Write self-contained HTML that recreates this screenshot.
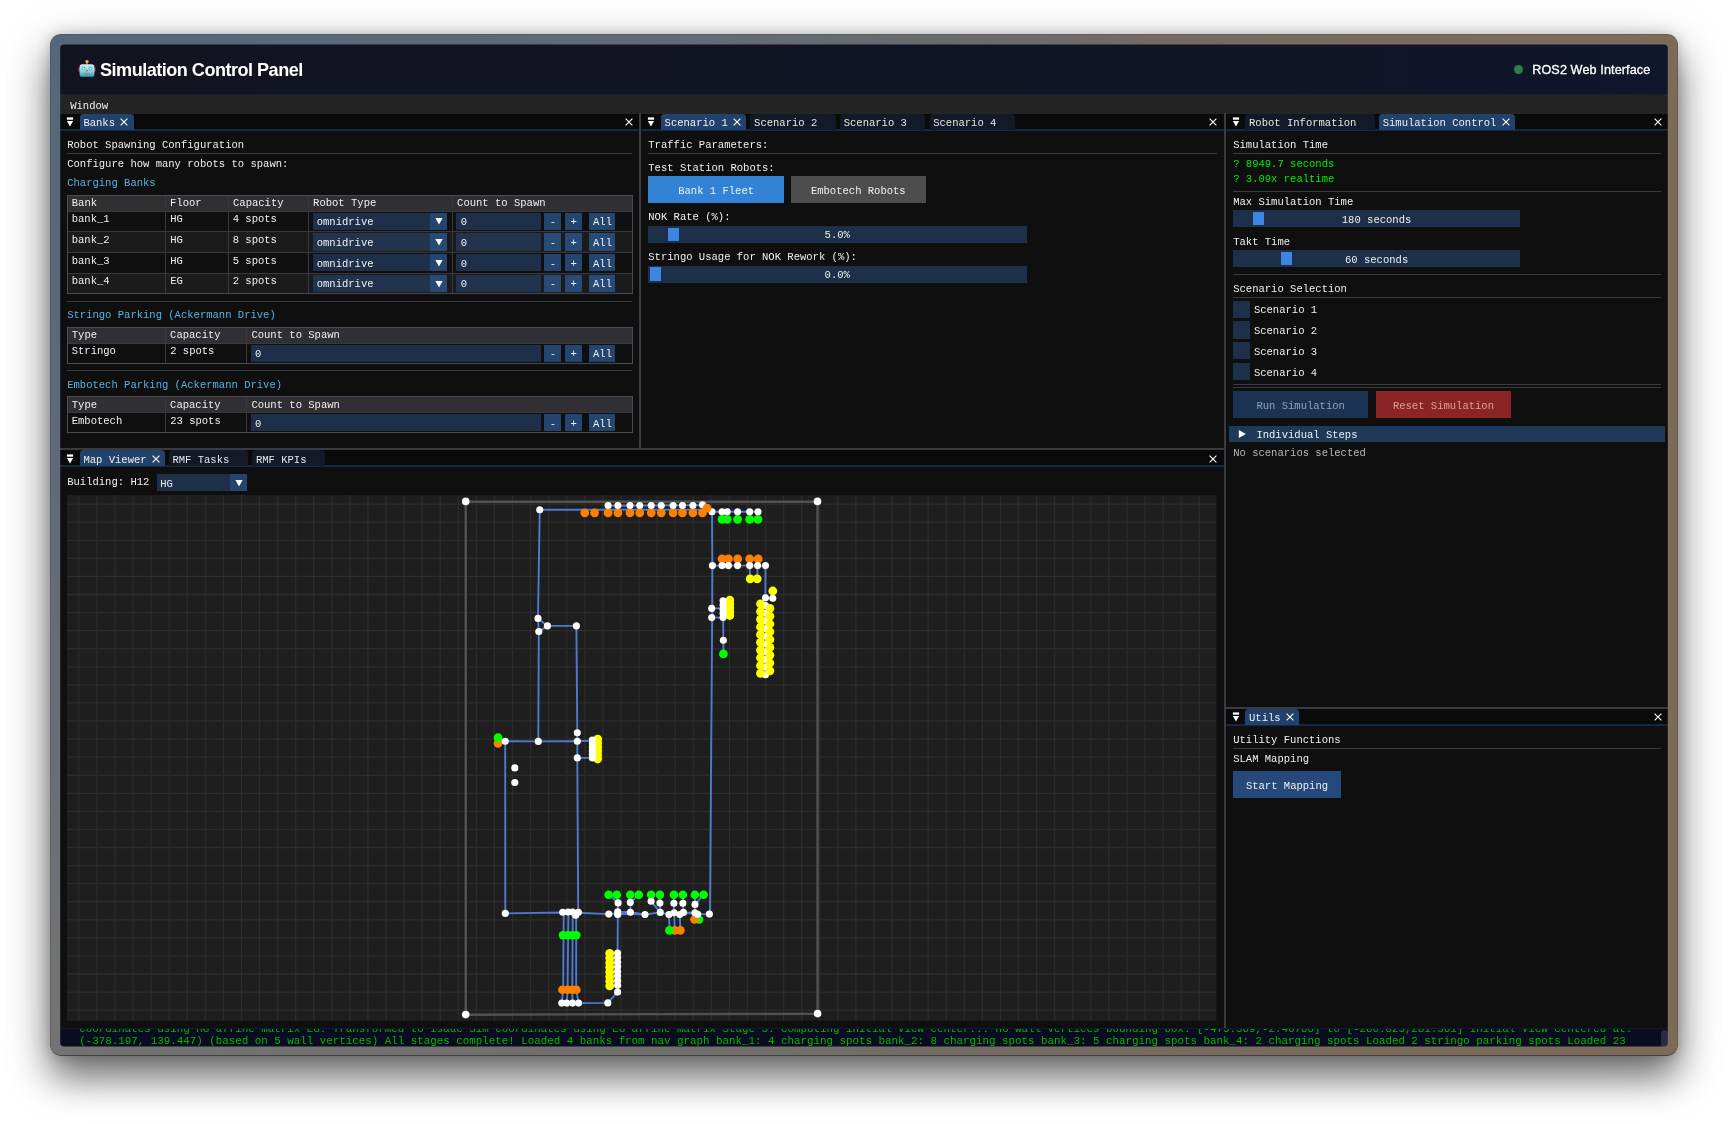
<!DOCTYPE html>
<html lang="en"><head><meta charset="utf-8"><title>Simulation Control Panel</title>
<style>
html,body{margin:0;padding:0;}
body{width:1728px;height:1124px;overflow:hidden;background:#fff;position:relative;font-family:"Liberation Mono","DejaVu Sans Mono",monospace;}
#win{position:absolute;left:50.4px;top:34.3px;width:1627.2px;height:1021.8px;border-radius:11px;
background:radial-gradient(ellipse 75% 96% at 0% 0%,#56677c 0%,rgba(86,103,124,0.8) 35%,rgba(86,103,124,0) 100%),linear-gradient(90deg,#737373 0%,#716f6d 40%,#796b5e 75%,#7d6b5a 100%);
box-shadow:0 22px 36px rgba(0,0,0,0.52),0 8px 60px rgba(0,0,0,0.13),0 0 14px rgba(0,0,0,0.18),inset 0 -1px 0.5px rgba(0,0,0,0.35),inset 0 0 0 0.5px rgba(0,0,0,0.25);}
#c{will-change:transform;position:absolute;left:0;top:0;width:1728px;height:1124px;clip-path:inset(44.4px 60.2px 77.6px 60.2px round 4px);}
#c div,#c svg{position:absolute;}
.t{font-size:10.54px;line-height:12px;white-space:pre;color:#f0f0f0;}
.hd{font-family:"Liberation Sans","DejaVu Sans",sans-serif;color:#fff;white-space:pre;}
.lg{font-family:"Liberation Mono","DejaVu Sans Mono",monospace;font-size:10.84px;line-height:12.5px;color:#00b800;white-space:pre;}
</style></head><body>
<div id="win"></div>
<div id="c">
<div style="left:60px;top:44px;width:1608px;height:51px;background:linear-gradient(90deg,#13131f 0%,#10162b 100%);"></div>
<div style="left:60.00px;top:94.00px;width:1608.00px;height:1.00px;background:#181e33;"></div>
<svg style="left:77px;top:58px" width="20" height="22" viewBox="0 0 20 22">
<defs><linearGradient id="rg" x1="0" y1="0" x2="0" y2="1"><stop offset="0" stop-color="#cfeef3"/><stop offset="0.55" stop-color="#8fd3de"/><stop offset="1" stop-color="#2f9db0"/></linearGradient></defs>
<rect x="1.5" y="9.6" width="1.8" height="4.2" rx="0.7" fill="#c23b30"/><rect x="16.7" y="9.6" width="1.8" height="4.2" rx="0.7" fill="#c23b30"/>
<rect x="9" y="4.6" width="2" height="2.4" fill="#7d5aa6"/>
<circle cx="10" cy="3.6" r="1.7" fill="#f4b62a"/>
<rect x="2.6" y="6.2" width="14.8" height="12.6" rx="2.6" fill="url(#rg)"/>
<circle cx="6.6" cy="10.6" r="2" fill="#4fc3e0"/><circle cx="13.4" cy="10.6" r="2" fill="#4fc3e0"/>
<circle cx="6.6" cy="10.6" r="0.9" fill="#fff"/><circle cx="13.4" cy="10.6" r="0.9" fill="#fff"/>
<circle cx="10" cy="12.6" r="0.9" fill="#e0483b"/>
<rect x="7" y="15.2" width="6" height="1.5" rx="0.4" fill="#7c8f95"/>
</svg>
<div class="hd" style="left:100px;top:59.2px;font-size:18.07px;font-weight:700;line-height:22px;letter-spacing:-0.5px;">Simulation Control Panel</div>
<div style="left:1514px;top:65.4px;width:9px;height:9px;border-radius:50%;background:#2f7d47;"></div>
<div class="hd" style="left:1532.2px;top:62px;font-size:12.65px;font-weight:400;line-height:16px;letter-spacing:0.1px;-webkit-text-stroke:0.3px #fff;">ROS2 Web Interface</div>
<div style="left:60.00px;top:95.00px;width:1608.00px;height:19.00px;background:#242424;"></div>
<div class="t" style="left:70.20px;top:100.00px;">Window</div>
<div style="left:60.00px;top:114.00px;width:1608.00px;height:914.00px;background:#0f0f0f;"></div>
<div style="left:60.00px;top:113.90px;width:579.00px;height:17.00px;background:#0a0a0a;"></div>
<svg style="left:60.00px;top:128.00px" width="579.00" height="4" viewBox="0 0 579.00 4"><rect x="0" y="1.3" width="579.00" height="1.5" fill="#1a3354"/></svg>
<svg style="left:65.90px;top:117.30px" width="8" height="10" viewBox="0 0 8 10"><rect x="0.9" y="0.4" width="6.2" height="2.3" fill="#fff"/><path d="M0.9 4.1 L7.1 4.1 L4 9.4 Z" fill="#fff"/></svg>
<div style="left:79.70px;top:114.20px;width:54.10px;height:15.80px;background:#23426b;border-radius:3.6px 3.6px 0 0;"></div>
<div class="t" style="left:83.40px;top:117.40px;">Banks</div>
<svg style="left:119.10px;top:117.40px" width="10" height="10" viewBox="-5 -5 10 10"><path d="M-3.4 -3.4 L3.4 3.4 M3.4 -3.4 L-3.4 3.4" stroke="#fff" stroke-width="1.1" fill="none"/></svg>
<svg style="left:623.50px;top:117.30px" width="10" height="10" viewBox="-5 -5 10 10"><path d="M-3.4 -3.4 L3.4 3.4 M3.4 -3.4 L-3.4 3.4" stroke="#fff" stroke-width="1.1" fill="none"/></svg>
<div style="left:641.00px;top:113.90px;width:583.00px;height:17.00px;background:#0a0a0a;"></div>
<svg style="left:641.00px;top:128.00px" width="583.00" height="4" viewBox="0 0 583.00 4"><rect x="0" y="1.3" width="583.00" height="1.5" fill="#1a3354"/></svg>
<svg style="left:646.90px;top:117.30px" width="8" height="10" viewBox="0 0 8 10"><rect x="0.9" y="0.4" width="6.2" height="2.3" fill="#fff"/><path d="M0.9 4.1 L7.1 4.1 L4 9.4 Z" fill="#fff"/></svg>
<div style="left:660.90px;top:114.20px;width:85.30px;height:15.80px;background:#23426b;border-radius:3.6px 3.6px 0 0;"></div>
<div class="t" style="left:664.60px;top:117.40px;">Scenario 1</div>
<svg style="left:731.50px;top:117.40px" width="10" height="10" viewBox="-5 -5 10 10"><path d="M-3.4 -3.4 L3.4 3.4 M3.4 -3.4 L-3.4 3.4" stroke="#fff" stroke-width="1.1" fill="none"/></svg>
<div style="left:750.40px;top:114.20px;width:85.40px;height:15.80px;background:#121a27;border-radius:3.6px 3.6px 0 0;"></div>
<div class="t" style="left:754.10px;top:117.40px;color:#e6e6e6;">Scenario 2</div>
<div style="left:840.00px;top:114.20px;width:85.20px;height:15.80px;background:#121a27;border-radius:3.6px 3.6px 0 0;"></div>
<div class="t" style="left:843.70px;top:117.40px;color:#e6e6e6;">Scenario 3</div>
<div style="left:929.50px;top:114.20px;width:85.20px;height:15.80px;background:#121a27;border-radius:3.6px 3.6px 0 0;"></div>
<div class="t" style="left:933.20px;top:117.40px;color:#e6e6e6;">Scenario 4</div>
<svg style="left:1208.30px;top:117.30px" width="10" height="10" viewBox="-5 -5 10 10"><path d="M-3.4 -3.4 L3.4 3.4 M3.4 -3.4 L-3.4 3.4" stroke="#fff" stroke-width="1.1" fill="none"/></svg>
<div style="left:1226.00px;top:113.90px;width:442.00px;height:17.00px;background:#0a0a0a;"></div>
<svg style="left:1226.00px;top:128.00px" width="442.00" height="4" viewBox="0 0 442.00 4"><rect x="0" y="1.3" width="442.00" height="1.5" fill="#1a3354"/></svg>
<svg style="left:1231.90px;top:117.30px" width="8" height="10" viewBox="0 0 8 10"><rect x="0.9" y="0.4" width="6.2" height="2.3" fill="#fff"/><path d="M0.9 4.1 L7.1 4.1 L4 9.4 Z" fill="#fff"/></svg>
<div style="left:1245.30px;top:114.20px;width:129.70px;height:15.80px;background:#121a27;border-radius:3.6px 3.6px 0 0;"></div>
<div class="t" style="left:1249.00px;top:117.40px;color:#e6e6e6;">Robot Information</div>
<div style="left:1379.00px;top:114.20px;width:136.20px;height:15.80px;background:#23426b;border-radius:3.6px 3.6px 0 0;"></div>
<div class="t" style="left:1382.70px;top:117.40px;">Simulation Control</div>
<svg style="left:1500.50px;top:117.40px" width="10" height="10" viewBox="-5 -5 10 10"><path d="M-3.4 -3.4 L3.4 3.4 M3.4 -3.4 L-3.4 3.4" stroke="#fff" stroke-width="1.1" fill="none"/></svg>
<svg style="left:1652.50px;top:117.30px" width="10" height="10" viewBox="-5 -5 10 10"><path d="M-3.4 -3.4 L3.4 3.4 M3.4 -3.4 L-3.4 3.4" stroke="#fff" stroke-width="1.1" fill="none"/></svg>
<div style="left:60.00px;top:450.10px;width:1164.00px;height:17.00px;background:#0a0a0a;"></div>
<svg style="left:60.00px;top:464.20px" width="1164.00" height="4" viewBox="0 0 1164.00 4"><rect x="0" y="1.3" width="1164.00" height="1.5" fill="#1a3354"/></svg>
<svg style="left:65.90px;top:453.50px" width="8" height="10" viewBox="0 0 8 10"><rect x="0.9" y="0.4" width="6.2" height="2.3" fill="#fff"/><path d="M0.9 4.1 L7.1 4.1 L4 9.4 Z" fill="#fff"/></svg>
<div style="left:79.70px;top:450.40px;width:85.60px;height:15.80px;background:#23426b;border-radius:3.6px 3.6px 0 0;"></div>
<div class="t" style="left:83.40px;top:453.60px;">Map Viewer</div>
<svg style="left:150.60px;top:453.60px" width="10" height="10" viewBox="-5 -5 10 10"><path d="M-3.4 -3.4 L3.4 3.4 M3.4 -3.4 L-3.4 3.4" stroke="#fff" stroke-width="1.1" fill="none"/></svg>
<div style="left:168.70px;top:450.40px;width:79.80px;height:15.80px;background:#121a27;border-radius:3.6px 3.6px 0 0;"></div>
<div class="t" style="left:172.40px;top:453.60px;color:#e6e6e6;">RMF Tasks</div>
<div style="left:252.20px;top:450.40px;width:72.80px;height:15.80px;background:#121a27;border-radius:3.6px 3.6px 0 0;"></div>
<div class="t" style="left:255.90px;top:453.60px;color:#e6e6e6;">RMF KPIs</div>
<svg style="left:1208.30px;top:453.50px" width="10" height="10" viewBox="-5 -5 10 10"><path d="M-3.4 -3.4 L3.4 3.4 M3.4 -3.4 L-3.4 3.4" stroke="#fff" stroke-width="1.1" fill="none"/></svg>
<div style="left:1226.00px;top:708.60px;width:442.00px;height:17.00px;background:#0a0a0a;"></div>
<svg style="left:1226.00px;top:722.70px" width="442.00" height="4" viewBox="0 0 442.00 4"><rect x="0" y="1.3" width="442.00" height="1.5" fill="#1a3354"/></svg>
<svg style="left:1231.90px;top:712.00px" width="8" height="10" viewBox="0 0 8 10"><rect x="0.9" y="0.4" width="6.2" height="2.3" fill="#fff"/><path d="M0.9 4.1 L7.1 4.1 L4 9.4 Z" fill="#fff"/></svg>
<div style="left:1245.30px;top:708.90px;width:54.00px;height:15.80px;background:#23426b;border-radius:3.6px 3.6px 0 0;"></div>
<div class="t" style="left:1249.00px;top:712.10px;">Utils</div>
<svg style="left:1284.60px;top:712.10px" width="10" height="10" viewBox="-5 -5 10 10"><path d="M-3.4 -3.4 L3.4 3.4 M3.4 -3.4 L-3.4 3.4" stroke="#fff" stroke-width="1.1" fill="none"/></svg>
<svg style="left:1652.50px;top:712.00px" width="10" height="10" viewBox="-5 -5 10 10"><path d="M-3.4 -3.4 L3.4 3.4 M3.4 -3.4 L-3.4 3.4" stroke="#fff" stroke-width="1.1" fill="none"/></svg>
<div style="left:639.00px;top:113.40px;width:2.00px;height:334.60px;background:#3a3a42;"></div>
<div style="left:1224.00px;top:113.40px;width:2.00px;height:914.60px;background:#3a3a42;"></div>
<div style="left:60.00px;top:448.00px;width:1164.00px;height:2.00px;background:#3a3a42;"></div>
<div style="left:1226.00px;top:706.50px;width:442.00px;height:2.00px;background:#3a3a42;"></div>
<div class="t" style="left:67.20px;top:139.20px;">Robot Spawning Configuration</div>
<div style="left:67.20px;top:153.20px;width:565.00px;height:1.00px;background:#3b3b42;"></div>
<div class="t" style="left:67.20px;top:157.90px;">Configure how many robots to spawn:</div>
<div class="t" style="left:67.20px;top:177.20px;color:#56b4e4;">Charging Banks</div>
<div style="left:67.20px;top:195.30px;width:565.00px;height:15.90px;background:#303034;"></div>
<div class="t" style="left:71.80px;top:197.20px;">Bank</div>
<div class="t" style="left:170.10px;top:197.20px;">Floor</div>
<div class="t" style="left:233.00px;top:197.20px;">Capacity</div>
<div class="t" style="left:313.10px;top:197.20px;">Robot Type</div>
<div class="t" style="left:457.10px;top:197.20px;">Count to Spawn</div>
<div class="t" style="left:71.70px;top:213.00px;">bank_1</div>
<div class="t" style="left:170.20px;top:213.00px;">HG</div>
<div class="t" style="left:232.70px;top:213.00px;">4 spots</div>
<div style="left:313.00px;top:212.60px;width:134.20px;height:17.20px;background:#1d2f49;"></div>
<div style="left:430.00px;top:212.60px;width:17.20px;height:17.20px;background:#24456d;"></div>
<svg style="left:432.60px;top:215.30px" width="12" height="12" viewBox="-6 -6 12 12"><path d="M-3.6 -2.8800000000000003 L3.6 -2.8800000000000003 L0 3.42 Z" fill="#fff"/></svg>
<div class="t" style="left:316.70px;top:216.00px;">omnidrive</div>
<div style="left:456.40px;top:212.60px;width:84.20px;height:17.20px;background:#1d2f49;"></div>
<div class="t" style="left:460.70px;top:216.00px;">0</div>
<div style="left:544.20px;top:212.60px;width:17.20px;height:17.20px;background:#24456d;"></div>
<div class="t" style="left:549.70px;top:216.00px;">-</div>
<div style="left:564.90px;top:212.60px;width:17.20px;height:17.20px;background:#24456d;"></div>
<div class="t" style="left:570.40px;top:216.00px;">+</div>
<div style="left:589.30px;top:212.60px;width:26.20px;height:17.20px;background:#24456d;"></div>
<div class="t" style="left:593.00px;top:216.00px;">All</div>
<div style="left:67.20px;top:231.98px;width:565.00px;height:20.78px;background:#1b1b1c;"></div>
<div class="t" style="left:71.70px;top:233.78px;">bank_2</div>
<div class="t" style="left:170.20px;top:233.78px;">HG</div>
<div class="t" style="left:232.70px;top:233.78px;">8 spots</div>
<div style="left:313.00px;top:233.38px;width:134.20px;height:17.20px;background:#22344d;"></div>
<div style="left:430.00px;top:233.38px;width:17.20px;height:17.20px;background:#284a76;"></div>
<svg style="left:432.60px;top:236.08px" width="12" height="12" viewBox="-6 -6 12 12"><path d="M-3.6 -2.8800000000000003 L3.6 -2.8800000000000003 L0 3.42 Z" fill="#fff"/></svg>
<div class="t" style="left:316.70px;top:236.78px;">omnidrive</div>
<div style="left:456.40px;top:233.38px;width:84.20px;height:17.20px;background:#22344d;"></div>
<div class="t" style="left:460.70px;top:236.78px;">0</div>
<div style="left:544.20px;top:233.38px;width:17.20px;height:17.20px;background:#284a76;"></div>
<div class="t" style="left:549.70px;top:236.78px;">-</div>
<div style="left:564.90px;top:233.38px;width:17.20px;height:17.20px;background:#284a76;"></div>
<div class="t" style="left:570.40px;top:236.78px;">+</div>
<div style="left:589.30px;top:233.38px;width:26.20px;height:17.20px;background:#284a76;"></div>
<div class="t" style="left:593.00px;top:236.78px;">All</div>
<div class="t" style="left:71.70px;top:254.56px;">bank_3</div>
<div class="t" style="left:170.20px;top:254.56px;">HG</div>
<div class="t" style="left:232.70px;top:254.56px;">5 spots</div>
<div style="left:313.00px;top:254.16px;width:134.20px;height:17.20px;background:#1d2f49;"></div>
<div style="left:430.00px;top:254.16px;width:17.20px;height:17.20px;background:#24456d;"></div>
<svg style="left:432.60px;top:256.86px" width="12" height="12" viewBox="-6 -6 12 12"><path d="M-3.6 -2.8800000000000003 L3.6 -2.8800000000000003 L0 3.42 Z" fill="#fff"/></svg>
<div class="t" style="left:316.70px;top:257.56px;">omnidrive</div>
<div style="left:456.40px;top:254.16px;width:84.20px;height:17.20px;background:#1d2f49;"></div>
<div class="t" style="left:460.70px;top:257.56px;">0</div>
<div style="left:544.20px;top:254.16px;width:17.20px;height:17.20px;background:#24456d;"></div>
<div class="t" style="left:549.70px;top:257.56px;">-</div>
<div style="left:564.90px;top:254.16px;width:17.20px;height:17.20px;background:#24456d;"></div>
<div class="t" style="left:570.40px;top:257.56px;">+</div>
<div style="left:589.30px;top:254.16px;width:26.20px;height:17.20px;background:#24456d;"></div>
<div class="t" style="left:593.00px;top:257.56px;">All</div>
<div style="left:67.20px;top:273.54px;width:565.00px;height:19.83px;background:#1b1b1c;"></div>
<div class="t" style="left:71.70px;top:275.34px;">bank_4</div>
<div class="t" style="left:170.20px;top:275.34px;">EG</div>
<div class="t" style="left:232.70px;top:275.34px;">2 spots</div>
<div style="left:313.00px;top:274.94px;width:134.20px;height:17.20px;background:#22344d;"></div>
<div style="left:430.00px;top:274.94px;width:17.20px;height:17.20px;background:#284a76;"></div>
<svg style="left:432.60px;top:277.64px" width="12" height="12" viewBox="-6 -6 12 12"><path d="M-3.6 -2.8800000000000003 L3.6 -2.8800000000000003 L0 3.42 Z" fill="#fff"/></svg>
<div class="t" style="left:316.70px;top:278.34px;">omnidrive</div>
<div style="left:456.40px;top:274.94px;width:84.20px;height:17.20px;background:#22344d;"></div>
<div class="t" style="left:460.70px;top:278.34px;">0</div>
<div style="left:544.20px;top:274.94px;width:17.20px;height:17.20px;background:#284a76;"></div>
<div class="t" style="left:549.70px;top:278.34px;">-</div>
<div style="left:564.90px;top:274.94px;width:17.20px;height:17.20px;background:#284a76;"></div>
<div class="t" style="left:570.40px;top:278.34px;">+</div>
<div style="left:589.30px;top:274.94px;width:26.20px;height:17.20px;background:#284a76;"></div>
<div class="t" style="left:593.00px;top:278.34px;">All</div>
<div style="left:67.20px;top:210.70px;width:565.00px;height:1.00px;background:#38383e;"></div>
<div style="left:67.20px;top:231.48px;width:565.00px;height:1.00px;background:#38383e;"></div>
<div style="left:67.20px;top:252.26px;width:565.00px;height:1.00px;background:#38383e;"></div>
<div style="left:67.20px;top:273.04px;width:565.00px;height:1.00px;background:#38383e;"></div>
<div style="left:164.90px;top:195.30px;width:1.00px;height:98.07px;background:#38383e;"></div>
<div style="left:227.80px;top:195.30px;width:1.00px;height:98.07px;background:#38383e;"></div>
<div style="left:307.90px;top:195.30px;width:1.00px;height:98.07px;background:#38383e;"></div>
<div style="left:451.90px;top:195.30px;width:1.00px;height:98.07px;background:#38383e;"></div>
<div style="left:67px;top:195px;width:566px;height:99px;border:1px solid #4a4a52;box-sizing:border-box;"></div>
<div style="left:67.20px;top:300.70px;width:565.00px;height:1.00px;background:#3b3b42;"></div>
<div class="t" style="left:67.20px;top:309.20px;color:#56b4e4;">Stringo Parking (Ackermann Drive)</div>
<div style="left:67.20px;top:327.30px;width:565.00px;height:15.90px;background:#303034;"></div>
<div class="t" style="left:71.80px;top:329.20px;">Type</div>
<div class="t" style="left:170.10px;top:329.20px;">Capacity</div>
<div class="t" style="left:251.40px;top:329.20px;">Count to Spawn</div>
<div class="t" style="left:71.70px;top:345.00px;">Stringo</div>
<div class="t" style="left:170.20px;top:345.00px;">2 spots</div>
<div style="left:250.60px;top:344.60px;width:290.00px;height:17.20px;background:#1d2f49;"></div>
<div class="t" style="left:254.90px;top:348.00px;">0</div>
<div style="left:544.20px;top:344.60px;width:17.20px;height:17.20px;background:#24456d;"></div>
<div class="t" style="left:549.70px;top:348.00px;">-</div>
<div style="left:564.90px;top:344.60px;width:17.20px;height:17.20px;background:#24456d;"></div>
<div class="t" style="left:570.40px;top:348.00px;">+</div>
<div style="left:589.30px;top:344.60px;width:26.20px;height:17.20px;background:#24456d;"></div>
<div class="t" style="left:593.00px;top:348.00px;">All</div>
<div style="left:67.20px;top:342.70px;width:565.00px;height:1.00px;background:#38383e;"></div>
<div style="left:164.90px;top:327.30px;width:1.00px;height:35.73px;background:#38383e;"></div>
<div style="left:246.20px;top:327.30px;width:1.00px;height:35.73px;background:#38383e;"></div>
<div style="left:67px;top:327px;width:566px;height:37px;border:1px solid #4a4a52;box-sizing:border-box;"></div>
<div style="left:67.20px;top:370.30px;width:565.00px;height:1.00px;background:#3b3b42;"></div>
<div class="t" style="left:67.20px;top:378.80px;color:#56b4e4;">Embotech Parking (Ackermann Drive)</div>
<div style="left:67.20px;top:397.00px;width:565.00px;height:15.90px;background:#303034;"></div>
<div class="t" style="left:71.80px;top:398.90px;">Type</div>
<div class="t" style="left:170.10px;top:398.90px;">Capacity</div>
<div class="t" style="left:251.40px;top:398.90px;">Count to Spawn</div>
<div class="t" style="left:71.70px;top:414.70px;">Embotech</div>
<div class="t" style="left:170.20px;top:414.70px;">23 spots</div>
<div style="left:250.60px;top:414.30px;width:290.00px;height:17.20px;background:#1d2f49;"></div>
<div class="t" style="left:254.90px;top:417.70px;">0</div>
<div style="left:544.20px;top:414.30px;width:17.20px;height:17.20px;background:#24456d;"></div>
<div class="t" style="left:549.70px;top:417.70px;">-</div>
<div style="left:564.90px;top:414.30px;width:17.20px;height:17.20px;background:#24456d;"></div>
<div class="t" style="left:570.40px;top:417.70px;">+</div>
<div style="left:589.30px;top:414.30px;width:26.20px;height:17.20px;background:#24456d;"></div>
<div class="t" style="left:593.00px;top:417.70px;">All</div>
<div style="left:67.20px;top:412.40px;width:565.00px;height:1.00px;background:#38383e;"></div>
<div style="left:164.90px;top:397.00px;width:1.00px;height:35.73px;background:#38383e;"></div>
<div style="left:246.20px;top:397.00px;width:1.00px;height:35.73px;background:#38383e;"></div>
<div style="left:67px;top:396px;width:566px;height:37px;border:1px solid #4a4a52;box-sizing:border-box;"></div>
<div class="t" style="left:648.30px;top:139.20px;">Traffic Parameters:</div>
<div style="left:648.30px;top:153.10px;width:568.70px;height:1.00px;background:#3b3b42;"></div>
<div class="t" style="left:648.30px;top:161.60px;">Test Station Robots:</div>
<div style="left:648.30px;top:175.90px;width:135.30px;height:26.90px;background:#3283d6;"></div>
<div class="t" style="left:678.20px;top:184.60px;">Bank 1 Fleet</div>
<div style="left:790.80px;top:175.90px;width:135.30px;height:26.90px;background:#4d4d4d;"></div>
<div class="t" style="left:810.90px;top:184.60px;">Embotech Robots</div>
<div class="t" style="left:648.30px;top:211.40px;">NOK Rate (%):</div>
<div style="left:648.30px;top:226.00px;width:378.30px;height:17.00px;background:#1d2f49;"></div>
<div style="left:667.90px;top:227.80px;width:10.90px;height:13.40px;background:#3d85e0;"></div>
<div class="t" style="left:824.60px;top:229.20px;">5.0%</div>
<div class="t" style="left:648.30px;top:251.20px;">Stringo Usage for NOK Rework (%):</div>
<div style="left:648.30px;top:265.60px;width:378.30px;height:17.00px;background:#1d2f49;"></div>
<div style="left:650.10px;top:267.40px;width:10.90px;height:13.40px;background:#3d85e0;"></div>
<div class="t" style="left:824.60px;top:269.10px;">0.0%</div>
<div class="t" style="left:1233.20px;top:139.10px;">Simulation Time</div>
<div style="left:1233.20px;top:153.20px;width:427.60px;height:1.00px;background:#3b3b42;"></div>
<div class="t" style="left:1233.20px;top:157.70px;color:#00ee00;">? 8949.7 seconds</div>
<div class="t" style="left:1233.20px;top:173.20px;color:#00ee00;">? 3.09x realtime</div>
<div style="left:1233.20px;top:191.30px;width:427.60px;height:1.00px;background:#3b3b42;"></div>
<div class="t" style="left:1233.20px;top:195.80px;">Max Simulation Time</div>
<div style="left:1233.20px;top:210.10px;width:286.80px;height:17.20px;background:#1d2f49;"></div>
<div style="left:1253.30px;top:211.90px;width:11.20px;height:13.60px;background:#3d85e0;"></div>
<div class="t" style="left:1341.80px;top:213.80px;">180 seconds</div>
<div class="t" style="left:1233.20px;top:235.60px;">Takt Time</div>
<div style="left:1233.20px;top:249.90px;width:286.80px;height:17.20px;background:#1d2f49;"></div>
<div style="left:1281.30px;top:251.70px;width:11.10px;height:13.60px;background:#3d85e0;"></div>
<div class="t" style="left:1345.00px;top:253.60px;">60 seconds</div>
<div style="left:1233.20px;top:274.30px;width:427.60px;height:1.00px;background:#3b3b42;"></div>
<div class="t" style="left:1233.20px;top:282.50px;">Scenario Selection</div>
<div style="left:1233.20px;top:296.90px;width:427.60px;height:1.00px;background:#3b3b42;"></div>
<div style="left:1233.20px;top:300.70px;width:17.20px;height:17.20px;background:#1d2f49;"></div>
<div class="t" style="left:1253.90px;top:304.30px;">Scenario 1</div>
<div style="left:1233.20px;top:321.48px;width:17.20px;height:17.20px;background:#1d2f49;"></div>
<div class="t" style="left:1253.90px;top:325.08px;">Scenario 2</div>
<div style="left:1233.20px;top:342.26px;width:17.20px;height:17.20px;background:#1d2f49;"></div>
<div class="t" style="left:1253.90px;top:345.86px;">Scenario 3</div>
<div style="left:1233.20px;top:363.04px;width:17.20px;height:17.20px;background:#1d2f49;"></div>
<div class="t" style="left:1253.90px;top:366.64px;">Scenario 4</div>
<div style="left:1233.20px;top:384.00px;width:427.60px;height:1.00px;background:#3b3b42;"></div>
<div style="left:1233.20px;top:387.30px;width:427.60px;height:1.00px;background:#3b3b42;"></div>
<div style="left:1233.20px;top:391.10px;width:135.00px;height:27.00px;background:#1b3353;"></div>
<div class="t" style="left:1256.40px;top:399.60px;color:#93a1b3;">Run Simulation</div>
<div style="left:1375.80px;top:391.10px;width:135.20px;height:27.00px;background:#8b2424;"></div>
<div class="t" style="left:1392.90px;top:399.60px;color:#d8a0a0;">Reset Simulation</div>
<div style="left:1228.90px;top:425.70px;width:436.30px;height:16.60px;background:#1f3958;"></div>
<svg style="left:1237px;top:428.5px" width="10" height="10" viewBox="-5 -5 10 10"><path d="M-3.2 -4 L3.9 0 L-3.2 4 Z" fill="#fff"/></svg>
<div class="t" style="left:1256.40px;top:429.30px;">Individual Steps</div>
<div class="t" style="left:1233.20px;top:447.40px;color:#b8b8b8;">No scenarios selected</div>
<div class="t" style="left:1233.20px;top:734.40px;">Utility Functions</div>
<div style="left:1233.20px;top:747.80px;width:427.60px;height:1.00px;background:#3b3b42;"></div>
<div class="t" style="left:1233.20px;top:753.00px;">SLAM Mapping</div>
<div style="left:1233.20px;top:770.60px;width:108.00px;height:27.20px;background:#24497a;"></div>
<div class="t" style="left:1245.90px;top:779.60px;">Start Mapping</div>
<div class="t" style="left:67.20px;top:475.60px;">Building: H12</div>
<div style="left:156.50px;top:474.30px;width:90.60px;height:17.20px;background:#1d2f49;"></div>
<div style="left:229.90px;top:474.30px;width:17.20px;height:17.20px;background:#24456d;"></div>
<svg style="left:232.50px;top:477.00px" width="12" height="12" viewBox="-6 -6 12 12"><path d="M-3.6 -2.8800000000000003 L3.6 -2.8800000000000003 L0 3.42 Z" fill="#fff"/></svg>
<div class="t" style="left:160.20px;top:477.70px;">HG</div>
<svg style="left:67.2px;top:495.2px" width="1149.40" height="525.90" viewBox="67.2 495.2 1149.40 525.90">
<rect x="67.2" y="495.2" width="1149.40" height="525.90" fill="#1e1e1e"/>
<path d="M79.00 495.2V1021.1M97.07 495.2V1021.1M115.14 495.2V1021.1M133.22 495.2V1021.1M151.29 495.2V1021.1M169.36 495.2V1021.1M187.43 495.2V1021.1M205.50 495.2V1021.1M223.58 495.2V1021.1M241.65 495.2V1021.1M259.72 495.2V1021.1M277.79 495.2V1021.1M295.86 495.2V1021.1M313.94 495.2V1021.1M332.01 495.2V1021.1M350.08 495.2V1021.1M368.15 495.2V1021.1M386.22 495.2V1021.1M404.30 495.2V1021.1M422.37 495.2V1021.1M440.44 495.2V1021.1M458.51 495.2V1021.1M476.58 495.2V1021.1M494.66 495.2V1021.1M512.73 495.2V1021.1M530.80 495.2V1021.1M548.87 495.2V1021.1M566.94 495.2V1021.1M585.02 495.2V1021.1M603.09 495.2V1021.1M621.16 495.2V1021.1M639.23 495.2V1021.1M657.30 495.2V1021.1M675.38 495.2V1021.1M693.45 495.2V1021.1M711.52 495.2V1021.1M729.59 495.2V1021.1M747.66 495.2V1021.1M765.74 495.2V1021.1M783.81 495.2V1021.1M801.88 495.2V1021.1M819.95 495.2V1021.1M838.02 495.2V1021.1M856.10 495.2V1021.1M874.17 495.2V1021.1M892.24 495.2V1021.1M910.31 495.2V1021.1M928.38 495.2V1021.1M946.46 495.2V1021.1M964.53 495.2V1021.1M982.60 495.2V1021.1M1000.67 495.2V1021.1M1018.74 495.2V1021.1M1036.82 495.2V1021.1M1054.89 495.2V1021.1M1072.96 495.2V1021.1M1091.03 495.2V1021.1M1109.10 495.2V1021.1M1127.18 495.2V1021.1M1145.25 495.2V1021.1M1163.32 495.2V1021.1M1181.39 495.2V1021.1M1199.46 495.2V1021.1M67.2 504.35H1216.6M67.2 522.42H1216.6M67.2 540.49H1216.6M67.2 558.57H1216.6M67.2 576.64H1216.6M67.2 594.71H1216.6M67.2 612.78H1216.6M67.2 630.85H1216.6M67.2 648.93H1216.6M67.2 667.00H1216.6M67.2 685.07H1216.6M67.2 703.14H1216.6M67.2 721.21H1216.6M67.2 739.29H1216.6M67.2 757.36H1216.6M67.2 775.43H1216.6M67.2 793.50H1216.6M67.2 811.57H1216.6M67.2 829.65H1216.6M67.2 847.72H1216.6M67.2 865.79H1216.6M67.2 883.86H1216.6M67.2 901.93H1216.6M67.2 920.01H1216.6M67.2 938.08H1216.6M67.2 956.15H1216.6M67.2 974.22H1216.6M67.2 992.29H1216.6M67.2 1010.37H1216.6" stroke="#c8c8c8" stroke-opacity="0.088" stroke-width="1.3" fill="none"/>
<path d="M465.9 501.9L817.7 501.9L817.8 1013.9L465.9 1014.9Z" stroke="#525252" stroke-width="2.4" fill="none"/>
<g transform="translate(0.2,0.3)">
<path d="M539.75 509.60L706.00 509.60L712.00 511.70M608.10 505.60L702.50 505.00M712.00 511.70L758.00 511.70M712.00 511.70L712.40 565.50L712.20 617.50L710.00 914.00M712.40 565.50L765.50 565.50M749.70 565.50L750.10 578.70M757.60 565.50L757.20 578.70M765.50 565.50L765.40 597.70L772.80 598.20M765.40 597.70L765.60 674.30M539.75 509.60L538.00 618.30L538.80 631.50L538.30 741.30M538.00 618.30L547.40 625.80L538.80 631.50M547.40 625.80L576.40 625.80L577.30 732.60L577.30 757.80L578.20 912.60M505.20 741.10L538.30 741.30L577.30 741.10L592.40 740.50M577.30 757.80L592.40 757.80M505.20 741.10L505.30 913.30M505.30 913.30L562.90 912.40L578.20 912.60L608.80 914.00L617.70 913.10L630.40 912.20L645.00 914.40L660.30 912.30L669.00 914.40L674.10 912.70L679.80 914.40L683.40 912.30L694.90 912.70L697.70 914.10L709.40 914.00M617.70 914.30L630.40 913.60L645.00 914.40M617.70 912.20L630.40 911.60M683.40 913.20L697.70 913.20M711.80 608.30L723.10 608.30M711.70 617.50L723.10 617.50M723.10 617.50L723.40 640.20L723.40 653.80M563.70 912.20L563.20 989.60L561.75 1003.00M568.40 911.90L567.60 989.60L566.80 1003.00M572.70 911.90L572.30 989.60L572.50 1003.00M576.20 915.20L576.20 989.60L578.60 1003.00M561.75 1003.00L578.60 1003.00L607.80 1002.80L617.60 992.00L617.60 952.90L617.90 912.70M608.60 894.60L618.10 902.80M616.80 894.60L618.10 902.80M618.10 902.80L617.70 913.10M630.30 894.60L630.30 902.30M638.80 894.60L630.30 902.30M630.30 902.30L630.40 912.20M651.10 894.60L651.10 901.20L660.30 912.30M659.90 894.60L659.90 903.00L660.30 912.30M673.90 894.60L673.90 903.20L674.10 912.70M682.90 894.60L682.90 903.20L683.40 912.30M694.90 894.60L695.00 904.30L694.90 912.70M703.60 894.60L695.00 904.30M669.00 914.40L669.60 930.30M674.10 912.70L674.80 930.30M679.80 914.40L680.40 930.30" stroke="#4c7bd0" stroke-width="1.9" fill="none" stroke-linejoin="round"/>
<circle cx="465.70" cy="501.30" r="3.8" fill="#ffffff"/>
<circle cx="817.50" cy="501.30" r="3.8" fill="#ffffff"/>
<circle cx="817.60" cy="1013.50" r="3.8" fill="#ffffff"/>
<circle cx="465.70" cy="1014.50" r="3.8" fill="#ffffff"/>
<circle cx="584.75" cy="512.75" r="4.4" fill="#ff8000"/>
<circle cx="594.60" cy="512.75" r="4.4" fill="#ff8000"/>
<circle cx="608.10" cy="512.75" r="4.4" fill="#ff8000"/>
<circle cx="617.90" cy="512.75" r="4.4" fill="#ff8000"/>
<circle cx="630.00" cy="512.75" r="4.4" fill="#ff8000"/>
<circle cx="639.75" cy="512.75" r="4.4" fill="#ff8000"/>
<circle cx="651.25" cy="512.75" r="4.4" fill="#ff8000"/>
<circle cx="661.25" cy="512.75" r="4.4" fill="#ff8000"/>
<circle cx="673.10" cy="512.75" r="4.4" fill="#ff8000"/>
<circle cx="682.50" cy="512.75" r="4.4" fill="#ff8000"/>
<circle cx="692.90" cy="512.75" r="4.4" fill="#ff8000"/>
<circle cx="702.50" cy="512.75" r="4.4" fill="#ff8000"/>
<circle cx="608.10" cy="505.40" r="3.55" fill="#ffffff"/>
<circle cx="617.90" cy="505.40" r="3.55" fill="#ffffff"/>
<circle cx="630.00" cy="505.40" r="3.55" fill="#ffffff"/>
<circle cx="639.75" cy="505.40" r="3.55" fill="#ffffff"/>
<circle cx="651.25" cy="505.40" r="3.55" fill="#ffffff"/>
<circle cx="661.25" cy="505.40" r="3.55" fill="#ffffff"/>
<circle cx="673.10" cy="505.40" r="3.55" fill="#ffffff"/>
<circle cx="682.50" cy="505.40" r="3.55" fill="#ffffff"/>
<circle cx="692.90" cy="505.40" r="3.55" fill="#ffffff"/>
<circle cx="702.50" cy="504.60" r="3.55" fill="#ffffff"/>
<circle cx="539.75" cy="509.60" r="3.55" fill="#ffffff"/>
<circle cx="712.00" cy="511.70" r="3.55" fill="#ffffff"/>
<circle cx="707.00" cy="508.10" r="4.4" fill="#ff8000"/>
<circle cx="722.10" cy="519.30" r="4.4" fill="#00ff00"/>
<circle cx="727.20" cy="519.30" r="4.4" fill="#00ff00"/>
<circle cx="737.60" cy="519.30" r="4.4" fill="#00ff00"/>
<circle cx="749.70" cy="519.30" r="4.4" fill="#00ff00"/>
<circle cx="758.00" cy="519.30" r="4.4" fill="#00ff00"/>
<circle cx="722.10" cy="511.70" r="3.55" fill="#ffffff"/>
<circle cx="727.20" cy="511.70" r="3.55" fill="#ffffff"/>
<circle cx="737.60" cy="511.70" r="3.55" fill="#ffffff"/>
<circle cx="749.70" cy="511.70" r="3.55" fill="#ffffff"/>
<circle cx="758.00" cy="511.70" r="3.55" fill="#ffffff"/>
<circle cx="722.10" cy="558.80" r="4.4" fill="#ff8000"/>
<circle cx="728.40" cy="558.80" r="4.4" fill="#ff8000"/>
<circle cx="737.70" cy="558.80" r="4.4" fill="#ff8000"/>
<circle cx="749.70" cy="558.80" r="4.4" fill="#ff8000"/>
<circle cx="758.20" cy="558.80" r="4.4" fill="#ff8000"/>
<circle cx="712.40" cy="565.50" r="3.55" fill="#ffffff"/>
<circle cx="722.10" cy="565.50" r="3.55" fill="#ffffff"/>
<circle cx="728.40" cy="565.50" r="3.55" fill="#ffffff"/>
<circle cx="737.60" cy="565.50" r="3.55" fill="#ffffff"/>
<circle cx="749.70" cy="565.50" r="3.55" fill="#ffffff"/>
<circle cx="757.60" cy="565.50" r="3.55" fill="#ffffff"/>
<circle cx="765.50" cy="565.50" r="3.55" fill="#ffffff"/>
<circle cx="750.20" cy="578.70" r="4.4" fill="#ffff00"/>
<circle cx="757.20" cy="578.70" r="4.4" fill="#ffff00"/>
<circle cx="765.50" cy="597.70" r="3.55" fill="#ffffff"/>
<circle cx="765.50" cy="605.40" r="3.55" fill="#ffffff"/>
<circle cx="765.50" cy="613.10" r="3.55" fill="#ffffff"/>
<circle cx="765.50" cy="620.80" r="3.55" fill="#ffffff"/>
<circle cx="765.50" cy="628.50" r="3.55" fill="#ffffff"/>
<circle cx="765.50" cy="636.20" r="3.55" fill="#ffffff"/>
<circle cx="765.50" cy="643.90" r="3.55" fill="#ffffff"/>
<circle cx="765.50" cy="651.60" r="3.55" fill="#ffffff"/>
<circle cx="765.50" cy="659.30" r="3.55" fill="#ffffff"/>
<circle cx="765.50" cy="667.00" r="3.55" fill="#ffffff"/>
<circle cx="765.50" cy="674.70" r="3.55" fill="#ffffff"/>
<circle cx="772.80" cy="598.20" r="3.55" fill="#ffffff"/>
<circle cx="772.80" cy="590.90" r="4.4" fill="#ffff00"/>
<circle cx="760.50" cy="603.70" r="4.4" fill="#ffff00"/>
<circle cx="760.50" cy="611.43" r="4.4" fill="#ffff00"/>
<circle cx="760.50" cy="619.17" r="4.4" fill="#ffff00"/>
<circle cx="760.50" cy="626.90" r="4.4" fill="#ffff00"/>
<circle cx="760.50" cy="634.63" r="4.4" fill="#ffff00"/>
<circle cx="760.50" cy="642.37" r="4.4" fill="#ffff00"/>
<circle cx="760.50" cy="650.10" r="4.4" fill="#ffff00"/>
<circle cx="760.50" cy="657.83" r="4.4" fill="#ffff00"/>
<circle cx="760.50" cy="665.57" r="4.4" fill="#ffff00"/>
<circle cx="760.50" cy="673.30" r="4.4" fill="#ffff00"/>
<circle cx="769.90" cy="608.30" r="4.4" fill="#ffff00"/>
<circle cx="769.90" cy="616.10" r="4.4" fill="#ffff00"/>
<circle cx="769.90" cy="623.90" r="4.4" fill="#ffff00"/>
<circle cx="769.90" cy="631.70" r="4.4" fill="#ffff00"/>
<circle cx="769.90" cy="639.50" r="4.4" fill="#ffff00"/>
<circle cx="769.90" cy="647.30" r="4.4" fill="#ffff00"/>
<circle cx="769.90" cy="655.10" r="4.4" fill="#ffff00"/>
<circle cx="769.90" cy="662.90" r="4.4" fill="#ffff00"/>
<circle cx="769.90" cy="670.70" r="4.4" fill="#ffff00"/>
<circle cx="729.80" cy="600.00" r="4.4" fill="#ffff00"/>
<circle cx="729.80" cy="603.85" r="4.4" fill="#ffff00"/>
<circle cx="729.80" cy="607.70" r="4.4" fill="#ffff00"/>
<circle cx="729.80" cy="611.55" r="4.4" fill="#ffff00"/>
<circle cx="729.80" cy="615.40" r="4.4" fill="#ffff00"/>
<circle cx="723.10" cy="600.60" r="3.55" fill="#ffffff"/>
<circle cx="723.10" cy="604.83" r="3.55" fill="#ffffff"/>
<circle cx="723.10" cy="609.05" r="3.55" fill="#ffffff"/>
<circle cx="723.10" cy="613.27" r="3.55" fill="#ffffff"/>
<circle cx="723.10" cy="617.50" r="3.55" fill="#ffffff"/>
<circle cx="711.70" cy="608.30" r="3.55" fill="#ffffff"/>
<circle cx="711.70" cy="617.50" r="3.55" fill="#ffffff"/>
<circle cx="723.40" cy="640.20" r="3.55" fill="#ffffff"/>
<circle cx="723.40" cy="653.80" r="4.4" fill="#00ff00"/>
<circle cx="538.00" cy="618.30" r="3.55" fill="#ffffff"/>
<circle cx="547.40" cy="625.80" r="3.55" fill="#ffffff"/>
<circle cx="538.80" cy="631.50" r="3.55" fill="#ffffff"/>
<circle cx="576.40" cy="625.80" r="3.55" fill="#ffffff"/>
<circle cx="577.30" cy="732.60" r="3.55" fill="#ffffff"/>
<circle cx="577.30" cy="741.10" r="3.55" fill="#ffffff"/>
<circle cx="577.30" cy="757.80" r="3.55" fill="#ffffff"/>
<circle cx="538.30" cy="741.30" r="3.55" fill="#ffffff"/>
<circle cx="498.10" cy="743.20" r="4.4" fill="#ff8000"/>
<circle cx="498.10" cy="737.60" r="4.4" fill="#00ff00"/>
<circle cx="505.20" cy="741.10" r="3.55" fill="#ffffff"/>
<circle cx="514.80" cy="767.80" r="3.55" fill="#ffffff"/>
<circle cx="514.80" cy="782.40" r="3.55" fill="#ffffff"/>
<circle cx="597.70" cy="739.00" r="4.4" fill="#ffff00"/>
<circle cx="597.70" cy="742.98" r="4.4" fill="#ffff00"/>
<circle cx="597.70" cy="746.96" r="4.4" fill="#ffff00"/>
<circle cx="597.70" cy="750.94" r="4.4" fill="#ffff00"/>
<circle cx="597.70" cy="754.92" r="4.4" fill="#ffff00"/>
<circle cx="597.70" cy="758.90" r="4.4" fill="#ffff00"/>
<circle cx="592.40" cy="739.90" r="3.55" fill="#ffffff"/>
<circle cx="592.40" cy="743.48" r="3.55" fill="#ffffff"/>
<circle cx="592.40" cy="747.06" r="3.55" fill="#ffffff"/>
<circle cx="592.40" cy="750.64" r="3.55" fill="#ffffff"/>
<circle cx="592.40" cy="754.22" r="3.55" fill="#ffffff"/>
<circle cx="592.40" cy="757.80" r="3.55" fill="#ffffff"/>
<circle cx="505.30" cy="913.30" r="3.55" fill="#ffffff"/>
<circle cx="562.70" cy="912.20" r="3.55" fill="#ffffff"/>
<circle cx="568.10" cy="911.90" r="3.55" fill="#ffffff"/>
<circle cx="572.70" cy="911.90" r="3.55" fill="#ffffff"/>
<circle cx="575.70" cy="915.20" r="3.55" fill="#ffffff"/>
<circle cx="578.40" cy="912.20" r="3.55" fill="#ffffff"/>
<circle cx="562.90" cy="935.20" r="4.2" fill="#00ff00"/>
<circle cx="567.60" cy="935.20" r="4.2" fill="#00ff00"/>
<circle cx="572.30" cy="935.20" r="4.2" fill="#00ff00"/>
<circle cx="576.40" cy="935.20" r="4.2" fill="#00ff00"/>
<circle cx="562.40" cy="989.60" r="4.3" fill="#ff8000"/>
<circle cx="567.60" cy="989.60" r="4.3" fill="#ff8000"/>
<circle cx="572.30" cy="989.60" r="4.3" fill="#ff8000"/>
<circle cx="576.40" cy="989.60" r="4.3" fill="#ff8000"/>
<circle cx="561.75" cy="1003.00" r="3.55" fill="#ffffff"/>
<circle cx="566.80" cy="1003.00" r="3.55" fill="#ffffff"/>
<circle cx="572.50" cy="1003.00" r="3.55" fill="#ffffff"/>
<circle cx="578.60" cy="1003.00" r="3.55" fill="#ffffff"/>
<circle cx="607.80" cy="1002.80" r="3.55" fill="#ffffff"/>
<circle cx="609.70" cy="953.30" r="4.4" fill="#ffff00"/>
<circle cx="609.70" cy="957.94" r="4.4" fill="#ffff00"/>
<circle cx="609.70" cy="962.59" r="4.4" fill="#ffff00"/>
<circle cx="609.70" cy="967.23" r="4.4" fill="#ffff00"/>
<circle cx="609.70" cy="971.87" r="4.4" fill="#ffff00"/>
<circle cx="609.70" cy="976.51" r="4.4" fill="#ffff00"/>
<circle cx="609.70" cy="981.16" r="4.4" fill="#ffff00"/>
<circle cx="609.70" cy="985.80" r="4.4" fill="#ffff00"/>
<circle cx="617.60" cy="952.90" r="3.55" fill="#ffffff"/>
<circle cx="617.60" cy="957.51" r="3.55" fill="#ffffff"/>
<circle cx="617.60" cy="962.13" r="3.55" fill="#ffffff"/>
<circle cx="617.60" cy="966.74" r="3.55" fill="#ffffff"/>
<circle cx="617.60" cy="971.36" r="3.55" fill="#ffffff"/>
<circle cx="617.60" cy="975.97" r="3.55" fill="#ffffff"/>
<circle cx="617.60" cy="980.59" r="3.55" fill="#ffffff"/>
<circle cx="617.60" cy="985.20" r="3.55" fill="#ffffff"/>
<circle cx="617.60" cy="992.00" r="3.55" fill="#ffffff"/>
<circle cx="608.60" cy="894.60" r="4.3" fill="#00ff00"/>
<circle cx="616.80" cy="894.60" r="4.3" fill="#00ff00"/>
<circle cx="630.30" cy="894.60" r="4.3" fill="#00ff00"/>
<circle cx="638.80" cy="894.60" r="4.3" fill="#00ff00"/>
<circle cx="651.10" cy="894.60" r="4.3" fill="#00ff00"/>
<circle cx="659.90" cy="894.60" r="4.3" fill="#00ff00"/>
<circle cx="673.90" cy="894.60" r="4.3" fill="#00ff00"/>
<circle cx="682.90" cy="894.60" r="4.3" fill="#00ff00"/>
<circle cx="694.90" cy="894.60" r="4.3" fill="#00ff00"/>
<circle cx="703.60" cy="894.60" r="4.3" fill="#00ff00"/>
<circle cx="618.10" cy="902.80" r="3.55" fill="#ffffff"/>
<circle cx="630.30" cy="902.30" r="3.55" fill="#ffffff"/>
<circle cx="651.10" cy="901.20" r="3.55" fill="#ffffff"/>
<circle cx="659.90" cy="903.00" r="3.55" fill="#ffffff"/>
<circle cx="673.90" cy="903.20" r="3.55" fill="#ffffff"/>
<circle cx="682.90" cy="903.20" r="3.55" fill="#ffffff"/>
<circle cx="695.00" cy="904.30" r="3.55" fill="#ffffff"/>
<circle cx="699.20" cy="919.50" r="4.2" fill="#00ff00"/>
<circle cx="694.40" cy="919.50" r="4.2" fill="#ff8000"/>
<circle cx="674.80" cy="930.30" r="4.3" fill="#ff8000"/>
<circle cx="680.40" cy="930.30" r="4.3" fill="#ff8000"/>
<circle cx="669.40" cy="930.30" r="4.3" fill="#00ff00"/>
<circle cx="608.80" cy="914.00" r="3.55" fill="#ffffff"/>
<circle cx="617.70" cy="911.80" r="3.55" fill="#ffffff"/>
<circle cx="617.70" cy="914.40" r="3.55" fill="#ffffff"/>
<circle cx="630.40" cy="912.20" r="3.55" fill="#ffffff"/>
<circle cx="645.00" cy="914.40" r="3.55" fill="#ffffff"/>
<circle cx="660.30" cy="912.30" r="3.55" fill="#ffffff"/>
<circle cx="669.00" cy="914.40" r="3.55" fill="#ffffff"/>
<circle cx="674.10" cy="912.70" r="3.55" fill="#ffffff"/>
<circle cx="679.80" cy="914.40" r="3.55" fill="#ffffff"/>
<circle cx="683.40" cy="912.30" r="3.55" fill="#ffffff"/>
<circle cx="694.90" cy="912.70" r="3.55" fill="#ffffff"/>
<circle cx="697.70" cy="914.10" r="3.55" fill="#ffffff"/>
<circle cx="709.40" cy="914.00" r="3.55" fill="#ffffff"/>
</g>
</svg>
<div style="left:60px;top:1028px;width:1608px;height:18.8px;background:#0a0d1f;border-top:1px solid #131836;box-sizing:border-box;overflow:hidden;"><div class="lg" style="left:19.3px;top:-6.3px;">coordinates using HG affine matrix EG: Transformed to Isaac Sim coordinates using EG affine matrix Stage 5: Computing initial view center... HG wall vertices bounding box: [-475.569,-2.46786] to [-280.825,281.361] Initial view centered at:</div><div class="lg" style="left:19.3px;top:6.3px;">(-378.197, 139.447) (based on 5 wall vertices) All stages complete! Loaded 4 banks from nav graph bank_1: 4 charging spots bank_2: 8 charging spots bank_3: 5 charging spots bank_4: 2 charging spots Loaded 2 stringo parking spots Loaded 23</div><div style="left:1601px;top:0.5px;width:7px;height:18px;background:#2a2d42;border-radius:3.5px;"></div></div>
</div>
</body></html>
